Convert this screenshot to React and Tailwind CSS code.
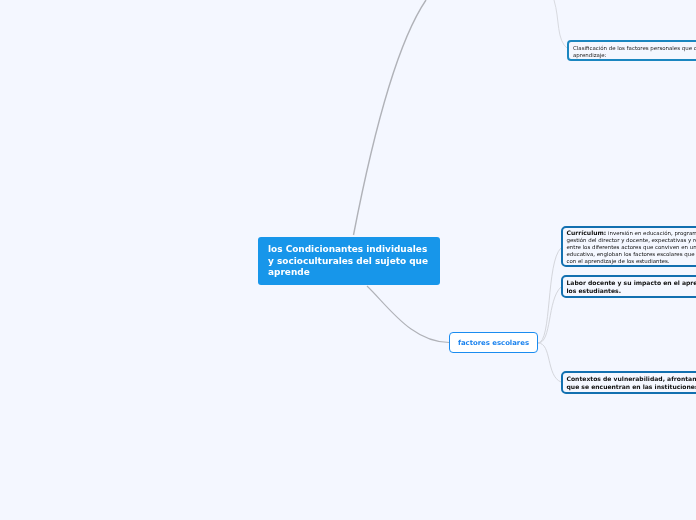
const FONT = "font-['DejaVu_Sans',sans-serif]";

function Node({ className, children }) {
  return <div className={`absolute whitespace-nowrap will-change-transform ${className}`}>{children}</div>;
}

function DetailCard({ className, children }) {
  return (
    <Node className={`left-[561px] w-[260px] rounded-[5px] border-2 border-[#1270b0] px-[3.5px] text-[#111] ${className}`}>
      {children}
    </Node>
  );
}

export default function App() {
  return (
    <div className={`relative w-[696px] h-[520px] overflow-hidden bg-[#f4f7ff] ${FONT}`}>
      {/* branches */}
      <svg className="absolute inset-0" width="696" height="520" fill="none">
        <path d="M353.5 235 C368 160 392 50 426 0" stroke="#b0b2b8" strokeWidth="1.4" />
        <path d="M367 286 C388 306 412 343 450 342.5" stroke="#b0b2b8" strokeWidth="1.1" />
        <path d="M554 0 C560 20 556 40 568 49" stroke="#d8dae0" strokeWidth="1" />
        <path d="M538 343 C552 343 546 262 561 248" stroke="#d4d6dc" strokeWidth="1" />
        <path d="M538 343 C552 343 547 300 561 287" stroke="#d4d6dc" strokeWidth="1" />
        <path d="M538 343 C552 343 546 376 561 382" stroke="#d4d6dc" strokeWidth="1" />
      </svg>

      <Node className="left-[258px] top-[237px] w-[182px] h-[48px] rounded-[3px] bg-[#1796ea] pl-[10px] pt-[7px] text-[8.95px] leading-[11.5px] font-bold text-white">
        los Condicionantes individuales<br />
        y socioculturales del sujeto que<br />
        aprende
      </Node>

      <Node className="left-[449px] top-[332px] w-[89px] h-[21px] rounded-[4px] border border-[#1a8cf0] bg-white text-center text-[6.9px] leading-[20px] font-bold text-[#1a82ee]">
        factores escolares
      </Node>

      <Node className="left-[567px] top-[40px] w-[260px] h-[21px] rounded-[4px] border-2 border-[#1a86c0] px-[4px] pt-[3px] text-[5.45px] leading-[6.5px] text-[#222]">
        Clasificación de los factores personales que condicionan el<br />
        aprendizaje:
      </Node>

      <DetailCard className="top-[226px] h-[41px] pt-[2px] text-[5.45px] leading-[6.9px]">
        <span className="text-[6.05px] font-bold">Currículum:</span> inversión en educación, programas,<br />
        gestión del director y docente, expectativas y relaciones<br />
        entre los diferentes actores que conviven en una comunidad<br />
        educativa, engloban los factores escolares que se relacionan<br />
        con el aprendizaje de los estudiantes.
      </DetailCard>

      <DetailCard className="top-[275px] h-[23px] pt-[2px] text-[6.05px] leading-[8px] font-bold">
        Labor docente y su impacto en el aprendizaje de<br />
        los estudiantes.
      </DetailCard>

      <DetailCard className="top-[371px] h-[23px] pt-[2px] text-[6.05px] leading-[7.5px] font-bold">
        Contextos de vulnerabilidad, afrontando los desafíos<br />
        que se encuentran en las instituciones educativas.
      </DetailCard>
    </div>
  );
}
